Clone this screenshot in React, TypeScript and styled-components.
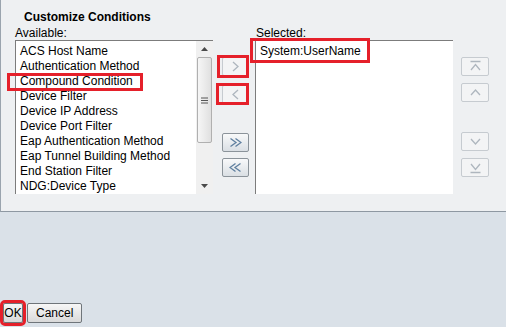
import React from 'react'
import styled, { createGlobalStyle } from 'styled-components'

const available = [
  'ACS Host Name',
  'Authentication Method',
  'Compound Condition',
  'Device Filter',
  'Device IP Address',
  'Device Port Filter',
  'Eap Authentication Method',
  'Eap Tunnel Building Method',
  'End Station Filter',
  'NDG:Device Type',
]

const selected = ['System:UserName']

type Box = { t: number; r: number; b: number; l: number }

// red annotation boxes drawn over the screenshot
const marks: Record<string, Box> = {
  'Compound Condition': { t: -1, r: -10, b: -2, l: -13 },
  'System:UserName': { t: -6, r: -9, b: -4, l: -10 },
}

const GlobalStyle = createGlobalStyle`
  html, body {
    margin: 0;
    padding: 0;
  }
  body {
    background: #dae1e8;
    font-family: 'Liberation Sans', Arial, sans-serif;
    font-size: 12px;
    color: #000;
  }
`

const Page = styled.div`
  width: 506px;
  height: 327px;
  display: flex;
  flex-direction: column;
  overflow: hidden;
`

const Panel = styled.section`
  box-sizing: border-box;
  height: 212px;
  padding: 10px 0 0 14px;
  background: #eef0f2;
  border-left: 1px solid #9aa4ae;
  border-bottom: 1px solid #8e98a2;
`

const Title = styled.h3`
  margin: 0 0 2px 9px;
  font-size: 12px;
  line-height: 14px;
  font-weight: bold;
`

const Chooser = styled.div`
  display: grid;
  grid-template-columns: 198px 42px 198px 36px;
  grid-template-rows: 14px 154px;
`

const Label = styled.div<{ $shift?: number }>`
  line-height: 14px;
  padding-left: ${({ $shift }) => $shift ?? 0}px;
`

const ListBox = styled.div`
  box-sizing: border-box;
  height: 154px;
  display: flex;
  background: #fff;
  border-top: 1px solid #7c7c7c;
  border-left: 1px solid #7c7c7c;
`

const Items = styled.ul`
  flex: 1;
  margin: 0;
  padding: 3px 0 0 4px;
  list-style: none;
`

const Item = styled.li`
  line-height: 15px;
  white-space: nowrap;
`

const Mark = styled.span<{ $box: Box }>`
  position: relative;
  display: inline-block;

  &::after {
    content: '';
    position: absolute;
    top: ${({ $box }) => $box.t}px;
    right: ${({ $box }) => $box.r}px;
    bottom: ${({ $box }) => $box.b}px;
    left: ${({ $box }) => $box.l}px;
    border: 3px solid #e5202a;
    pointer-events: none;
  }
`

const ScrollBar = styled.div`
  width: 17px;
  display: flex;
  flex-direction: column;
  background: #f0f0f0;
`

const ScrollArrow = styled.div`
  height: 16px;
  display: flex;
  align-items: center;
  justify-content: center;
`

const Thumb = styled.div`
  height: 84px;
  margin: 0 1px;
  display: flex;
  align-items: center;
  justify-content: center;
  border: 1px solid #b0b0b0;
  border-radius: 2px;
  background: linear-gradient(to right, #f6f6f6, #e0e0e0);
`

const Track = styled.div`
  flex: 1;
`

const ButtonColumn = styled.div<{ $pad: number }>`
  display: flex;
  flex-direction: column;
  align-items: flex-start;
  padding-left: ${({ $pad }) => $pad}px;
`

const MoveButton = styled.button<{ $w: number; $gap: number; $active?: boolean }>`
  position: relative;
  box-sizing: border-box;
  width: ${({ $w }) => $w}px;
  height: 19px;
  margin-top: ${({ $gap }) => $gap}px;
  padding: 0;
  display: flex;
  align-items: center;
  justify-content: center;
  border-radius: 2px;
  border: 1px solid ${({ $active }) => ($active ? '#8b939a' : '#c6cbd0')};
  background: ${({ $active }) =>
    $active ? 'linear-gradient(#f8f9fa, #dadfe4)' : '#f3f4f5'};
  color: ${({ $active }) => ($active ? '#5f7f9f' : '#aeb6be')};
`

const Overlay = styled.span<{ $box: Box }>`
  position: absolute;
  top: ${({ $box }) => $box.t}px;
  right: ${({ $box }) => $box.r}px;
  bottom: ${({ $box }) => $box.b}px;
  left: ${({ $box }) => $box.l}px;
  border: 3px solid #e5202a;
  pointer-events: none;
`

const Spacer = styled.div`
  flex: 1;
`

const Footer = styled.footer`
  display: flex;
  gap: 4px;
  padding: 0 0 4px 3px;
`

const FormButton = styled.button<{ $hl?: boolean }>`
  box-sizing: border-box;
  height: 20px;
  padding: 0 ${({ $hl }) => ($hl ? 0 : 8)}px;
  min-width: 20px;
  font-family: 'Liberation Sans', Arial, sans-serif;
  font-size: 12px;
  color: #000;
  border: 1px solid #6f757a;
  border-radius: 2px;
  background: linear-gradient(#f7f7f7, #d9d9d9);
  outline: ${({ $hl }) => ($hl ? '3px solid #e5202a' : 'none')};
`

type Glyph = 'right' | 'left' | 'rights' | 'lefts' | 'top' | 'up' | 'down' | 'bottom'

const Arrow = ({ kind }: { kind: Glyph }) => {
  const paths: Record<Glyph, string> = {
    right: 'M4 2 L9 6.5 L4 11',
    left: 'M9 2 L4 6.5 L9 11',
    rights: 'M1.5 2.5 L7 6.5 L1.5 10.5 M6.5 2.5 L12 6.5 L6.5 10.5',
    lefts: 'M11.5 2.5 L6 6.5 L11.5 10.5 M6.5 2.5 L1 6.5 L6.5 10.5',
    top: 'M1.5 1.5 H11.5 M2 10 L6.5 4.5 L11 10',
    up: 'M2 9 L6.5 4 L11 9',
    down: 'M2 4 L6.5 9 L11 4',
    bottom: 'M2 3 L6.5 8.5 L11 3 M1.5 11.5 H11.5',
  }
  return (
    <svg width="13" height="13" viewBox="0 0 13 13" fill="none">
      <path d={paths[kind]} stroke="currentColor" strokeWidth="1.3" />
    </svg>
  )
}

const Tri = ({ down }: { down?: boolean }) => (
  <svg width="7" height="4" viewBox="0 0 7 4">
    <path d={down ? 'M0 0 H7 L3.5 4 Z' : 'M0 4 H7 L3.5 0 Z'} fill="#4a4a4a" />
  </svg>
)

const Grip = () => (
  <svg width="7" height="7" viewBox="0 0 7 7">
    <path d="M0 1 H7 M0 3.5 H7 M0 6 H7" stroke="#555" strokeWidth="1" />
  </svg>
)

const List = ({ items, scroll }: { items: string[]; scroll?: boolean }) => (
  <ListBox>
    <Items>
      {items.map((name) => (
        <Item key={name}>{marks[name] ? <Mark $box={marks[name]}>{name}</Mark> : name}</Item>
      ))}
    </Items>
    {scroll && (
      <ScrollBar>
        <ScrollArrow>
          <Tri />
        </ScrollArrow>
        <Thumb>
          <Grip />
        </Thumb>
        <Track />
        <ScrollArrow>
          <Tri down />
        </ScrollArrow>
      </ScrollBar>
    )}
  </ListBox>
)

const App = () => {
  return (
    <Page>
      <GlobalStyle />
      <Panel>
        <Title>Customize Conditions</Title>
        <Chooser>
          <Label>Available:</Label>
          <div />
          <Label $shift={1}>Selected:</Label>
          <div />

          <List items={available} scroll />
          <ButtonColumn $pad={9}>
            <MoveButton $w={27} $gap={17}>
              <Arrow kind="right" />
              <Overlay $box={{ t: -3, r: -1, b: -3, l: -6 }} />
            </MoveButton>
            <MoveButton $w={27} $gap={9}>
              <Arrow kind="left" />
              <Overlay $box={{ t: -3, r: -1, b: -2, l: -7 }} />
            </MoveButton>
            <MoveButton $w={27} $gap={29} $active>
              <Arrow kind="rights" />
            </MoveButton>
            <MoveButton $w={27} $gap={6} $active>
              <Arrow kind="lefts" />
            </MoveButton>
          </ButtonColumn>
          <List items={selected} />
          <ButtonColumn $pad={8}>
            <MoveButton $w={28} $gap={17}>
              <Arrow kind="top" />
            </MoveButton>
            <MoveButton $w={28} $gap={7}>
              <Arrow kind="up" />
            </MoveButton>
            <MoveButton $w={28} $gap={30}>
              <Arrow kind="down" />
            </MoveButton>
            <MoveButton $w={28} $gap={7}>
              <Arrow kind="bottom" />
            </MoveButton>
          </ButtonColumn>
        </Chooser>
      </Panel>
      <Spacer />
      <Footer>
        <FormButton $hl>OK</FormButton>
        <FormButton>Cancel</FormButton>
      </Footer>
    </Page>
  )
}

export default App
